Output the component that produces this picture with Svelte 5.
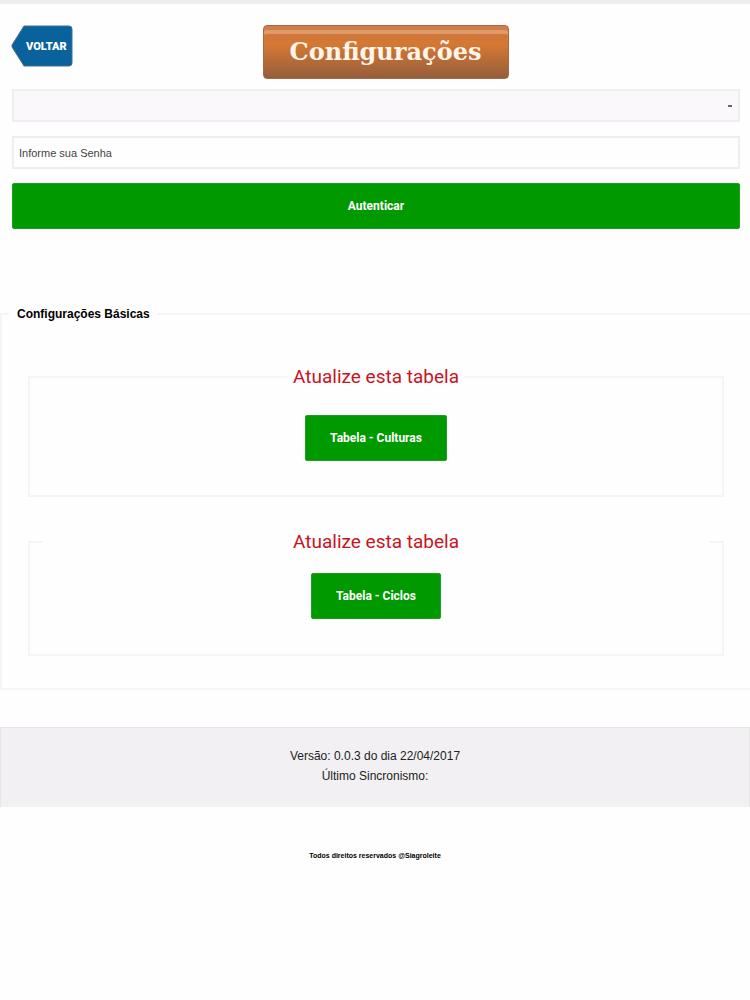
<script>
  let usuario = '';
  let senha = '';
  const tabelas = ['Culturas', 'Ciclos'];
</script>

<div class="topbar"></div>

<header>
  <a class="voltar" href="#voltar">
    <svg viewBox="0 0 62 42" aria-hidden="true">
      <path d="M13 1H58Q61 1 61 4V38Q61 41 58 41H13L1 22V20Z" fill="#09629b" stroke="#42708f"/>
    </svg>
    <span>VOLTAR</span>
  </a>
  <h1>Configurações</h1>
</header>

<form on:submit|preventDefault>
  <select aria-label="Usuário" bind:value={usuario}>
    <option value=""></option>
  </select>
  <input type="password" aria-label="Senha" placeholder="Informe sua Senha" bind:value={senha}>
  <button>Autenticar</button>
</form>

<fieldset class="basicas">
  <legend>Configurações Básicas</legend>
  {#each tabelas as tabela, i}
    <fieldset class="tabela" class:larga={i === 1}>
      <legend>Atualize esta tabela</legend>
      <button type="button">Tabela - {tabela}</button>
    </fieldset>
  {/each}
</fieldset>

<div class="panel">
  <p>Versão: 0.0.3 do dia 22/04/2017</p>
  <p>Último Sincronismo:</p>
</div>

<footer>Todos direitos reservados @Siagroleite</footer>

<style>
:global(body){
  background: #fefefe;
  color: #222;
  font-family: "Liberation Sans", Arial, sans-serif;
  font-size: 12px;
}
.topbar{
  height: 4px;
  background: #eeecef;
}
header{
  display: grid;
  grid-template-columns: 1fr auto 1fr;
  align-items: start;
  padding: 21px 10px 0 11px;
}
.voltar{
  display: grid;
  width: 62px;
  height: 42px;
  text-decoration: none;
}
.voltar svg, .voltar span{
  grid-area: 1 / 1;
}
.voltar span{
  align-self: center;
  padding-left: 15px;
  color: #fff;
  font: 900 11px Roboto, sans-serif;
}
h1{
  box-sizing: border-box;
  width: 246px;
  height: 54px;
  margin: 0 0 0 20px;
  border: 1px solid #a9683e;
  border-radius: 4px;
  background: linear-gradient(#c57642, #d67833 35%, #955e3c);
  box-shadow: inset 0 5px 1px -1px #cf7f49, inset 0 9px 1px -1px #e29a68;
  color: #fff5ea;
  font: bold 24px/52px "DejaVu Serif", serif;
  text-align: center;
}
form{
  display: grid;
  gap: 14px;
  padding: 10px 10px 0 12px;
}
select, input{
  box-sizing: border-box;
  width: 100%;
  height: 33px;
  margin: 0;
  border: 2px solid #f0edf0;
  border-radius: 0;
  padding: 0 5px;
  color: #222;
  font: 11px "Liberation Sans", sans-serif;
  background: #fefefe;
}
select{
  appearance: none;
  background: #faf8fb linear-gradient(#666, #666) no-repeat right 6px center / 4px 2px;
}
input::placeholder{
  color: #444;
  opacity: 1;
}
button{
  height: 46px;
  border: 1px solid #1c9f1c;
  border-radius: 2px;
  padding: 0 24px;
  background: #090;
  color: #fff;
  font: bold 12px Roboto, sans-serif;
}
fieldset{
  min-width: 0;
  margin: 0;
  border: 2px solid #f5f4f6;
}
.basicas{
  margin-top: 77px;
  border-right: 0;
  padding: 41px 26px 32px 26px;
}
.basicas > legend{
  margin-left: -19px;
  padding: 0 8px;
  color: #000;
  font-weight: bold;
  line-height: 16px;
}
.tabela{
  padding: 24px 0 34px;
  text-align: center;
}
.tabela legend{
  margin: 0 auto;
  padding: 0 5px;
  color: #c8141e;
  font: 19px/28px Roboto, sans-serif;
}
.larga{
  margin-top: 31px;
  padding: 17px 0 35px;
}
/* the second legend spans the row */
.larga legend{
  box-sizing: border-box;
  width: calc(100% - 24px);
}
.panel{
  margin-top: 37px;
  border: 1px solid #e8e5e9;
  border-bottom: 0;
  padding: 18px 0 21px;
  background: #f2f0f3;
  text-align: center;
}
.panel p{
  margin: 0;
  line-height: 20px;
}
footer{
  margin-top: 43px;
  color: #000;
  font-size: 7px;
  font-weight: bold;
  line-height: 12px;
  text-align: center;
}
</style>
